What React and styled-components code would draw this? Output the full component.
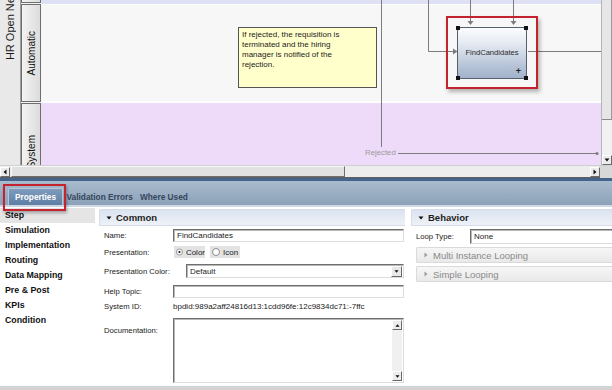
import React from 'react';
import styled, { createGlobalStyle, css } from 'styled-components';

const Global = createGlobalStyle`
  html, body { margin: 0; padding: 0; background: #fff; overflow: hidden; }
  body { font-family: "Liberation Sans", Arial, sans-serif; }
  * { box-sizing: border-box; }
`;

const Page = styled.div`
  width: 612px;
  height: 390px;
  display: flex;
  flex-direction: column;
  overflow: hidden;
  background: #fff;
`;

/* ---------- diagram canvas ---------- */
const Canvas = styled.section`
  flex: none;
  height: 178px;
  display: flex;
  flex-direction: column;
`;

const DiagramRow = styled.div`
  height: 165px;
  display: flex;
  overflow: hidden;
`;

const PoolLabel = styled.div`
  flex: none;
  width: 21px;
  height: 165px;
  background: #e9e9e9;
  border-right: 1px solid #a0a0a0;
  display: flex;
  flex-direction: column;
  justify-content: flex-end;
  align-items: center;
  padding-bottom: 105px;
  overflow: hidden;
`;

const PoolText = styled.span`
  writing-mode: vertical-rl;
  transform: rotate(180deg);
  font-size: 11px;
  color: #1a1a1a;
  white-space: nowrap;
`;

const LaneHeads = styled.div`
  flex: none;
  width: 20px;
  display: flex;
  flex-direction: column;
  gap: 1px;
  background: #f4f4f4;
`;

const LaneHead = styled.div`
  flex: none;
  height: ${p => p.$h}px;
  border: 1px solid #6e6e6e;
  border-top-width: ${p => (p.$open ? 0 : 1)}px;
  background: linear-gradient(90deg, #f3f3f3, #dcdcdc);
  display: flex;
  align-items: center;
  justify-content: center;
  overflow: hidden;
`;

const LaneTitle = styled.span`
  writing-mode: vertical-rl;
  transform: rotate(180deg);
  font-size: 10px;
  color: #111;
  white-space: nowrap;
`;

const Lanes = styled.div`
  flex: 1;
  position: relative;
  display: flex;
  flex-direction: column;
  overflow: hidden;
`;

const Lane = styled.div`
  flex: none;
  height: ${p => p.$h}px;
  background: ${p => p.$bg};
  border-bottom: ${p => p.$sep || 0}px solid #fdfdfd;
`;

const Connectors = styled.svg`
  position: absolute;
  left: 0;
  top: 0;
  pointer-events: none;
`;

const RejectedLabel = styled.span`
  position: absolute;
  left: 324px;
  top: 148px;
  font-size: 7.8px;
  color: #9a9a9a;
  background: #eedbf9;
  padding-right: 1px;
`;

const Note = styled.div`
  position: absolute;
  left: 197px;
  top: 27px;
  width: 139px;
  height: 61px;
  background: #ffffcc;
  border: 1px solid #555;
  padding: 2px 28px 2px 3px;
  font-size: 8px;
  line-height: 10px;
  color: #1c1c1c;
`;

const Selection = styled.div`
  position: absolute;
  left: 405px;
  top: 16px;
  width: 92px;
  height: 73px;
  border: 2px solid #c3232e;
  box-shadow: 2px 3px 4px rgba(0, 0, 0, 0.28);
  display: flex;
  align-items: center;
  justify-content: center;
`;

const Task = styled.div`
  position: relative;
  width: 70px;
  height: 52px;
  border: 1px solid #55606e;
  border-radius: 4px;
  background: linear-gradient(#fbfcfe 0%, #e6ebf3 30%, #b7c4d8 75%, #a2b2ca 100%);
  display: flex;
  align-items: center;
  justify-content: center;
  font-size: 7.6px;
  color: #2a2a2a;
`;

const Plus = styled.span`
  position: absolute;
  right: 5px;
  bottom: 2px;
  font-size: 9px;
  font-weight: bold;
  color: #222;
`;

const Handle = styled.span`
  position: absolute;
  width: 4px;
  height: 4px;
  background: #111;
  ${p => (p.$top ? 'top: -2px;' : 'bottom: -2px;')}
  ${p => (p.$left ? 'left: -2px;' : 'right: -2px;')}
`;

const VScroll = styled.div`
  flex: none;
  width: 11px;
  display: flex;
  flex-direction: column;
  background: #f1f1f1;
  border-left: 1px solid #b5b5b5;
`;

const VThumb = styled.div`
  height: 120px;
  background: #e6e6e6;
  border-bottom: 1px solid #8a8a8a;
  border-right: 1px solid #9a9a9a;
`;

const VTrack = styled.div`
  flex: 1;
`;

const ScrollBtn = styled.div`
  flex: none;
  width: 10px;
  height: 10px;
  background: #ececec;
  border: 1px solid;
  border-color: #fff #6a6a6a #6a6a6a #fff;
  display: flex;
  align-items: center;
  justify-content: center;
`;

const HScroll = styled.div`
  height: 13px;
  display: flex;
  align-items: center;
  background: #ededed;
  border-top: 1px solid #d0d0d0;
  border-bottom: 1px solid #5e5e5e;
`;

const HThumb = styled.div`
  width: 334px;
  height: 11px;
  margin-left: 1px;
  background: #e1e1e1;
  border: 1px solid;
  border-color: #f8f8f8 #6e6e6e #6e6e6e #f8f8f8;
`;

const HTrack = styled.div`
  flex: 1;
`;

const Corner = styled.div`
  width: 12px;
  height: 12px;
  background: #d8d8d8;
`;

/* ---------- properties ---------- */
const Props = styled.section`
  flex: 1;
  display: flex;
  flex-direction: column;
  min-height: 0;
`;

const TabBar = styled.div`
  flex: none;
  height: 29px;
  border-top: 3px solid #45648b;
  border-bottom: 2px solid #cdd8e4;
  background: linear-gradient(#a9bbce, #8ca1b8);
  display: flex;
  align-items: flex-end;
  padding-left: 8px;
`;

const Tab = styled.div`
  position: relative;
  height: 17px;
  display: flex;
  align-items: center;
  padding: 0 ${p => (p.$active ? '6px' : '3.5px')};
  font-size: 8.3px;
  font-weight: bold;
  white-space: nowrap;
  color: ${p => (p.$active ? '#fff' : '#34465c')};
  ${p =>
    p.$active &&
    css`
      background: linear-gradient(#7f9cbd, #5e7ea4);
      border: 1px solid #b8c7d8;
      border-bottom: none;
      border-radius: 2px 2px 0 0;
    `}
  ${p =>
    p.$marked &&
    css`
      &::after {
        content: '';
        position: absolute;
        left: -6px;
        top: -5px;
        right: -4px;
        bottom: -6px;
        border: 2px solid #c3232e;
        box-shadow: 1px 2px 3px rgba(0, 0, 0, 0.3);
      }
    `}
`;

const Body = styled.div`
  flex: 1;
  display: flex;
  min-height: 0;
`;

const Nav = styled.nav`
  flex: none;
  width: 96px;
  padding-top: 1px;
  display: flex;
  flex-direction: column;
`;

const NavItem = styled.div`
  height: 15px;
  width: 95px;
  line-height: 15px;
  padding-left: 5px;
  font-size: 8.8px;
  font-weight: bold;
  color: #111;
  background: ${p => (p.$active ? '#e5e5e5' : 'transparent')};
`;

const Panel = styled.div`
  flex: ${p => (p.$w ? 'none' : '1')};
  width: ${p => (p.$w ? `${p.$w}px` : 'auto')};
  margin-left: ${p => p.$ml}px;
  margin-top: 2px;
  display: flex;
  flex-direction: column;
  overflow: hidden;
`;

const SectionHead = styled.div`
  flex: none;
  height: 17px;
  display: flex;
  align-items: center;
  gap: 4px;
  padding-left: 6px;
  background: linear-gradient(#dbe3f0, #eef2f8);
  border: 1px solid #d6dde8;
  border-right: none;
  border-radius: 2px 0 0 0;
  font-size: 9.5px;
  font-weight: bold;
  color: #1e1e1e;
`;

const Fields = styled.div`
  display: flex;
  flex-direction: column;
  padding-left: 5px;
  padding-top: 3px;
`;

const FieldRow = styled.div`
  display: flex;
  align-items: ${p => (p.$top ? 'flex-start' : 'center')};
  height: ${p => p.$h}px;
  margin-top: ${p => p.$mt || 0}px;
`;

const Label = styled.span`
  flex: none;
  width: ${p => p.$w || 69}px;
  font-size: 7.7px;
  color: #222;
  padding-top: ${p => p.$pt || 0}px;
`;

const Inset = styled.div`
  flex: none;
  width: ${p => p.$w}px;
  height: ${p => p.$h}px;
  margin-left: ${p => p.$ml || 0}px;
  background: #fff;
  border: 1px solid;
  border-color: #6f6f6f #dcdcdc #dcdcdc #6f6f6f;
  box-shadow: inset 1px 1px 0 #b8b8b8;
  display: flex;
  align-items: center;
  padding-left: 3px;
  font-size: 8px;
  color: #222;
  overflow: hidden;
`;

const InsetText = styled.span`
  flex: 1;
  white-space: nowrap;
`;

const DropBtn = styled.div`
  flex: none;
  width: 11px;
  height: 11px;
  margin-right: 1px;
  background: #e8e8e8;
  border: 1px solid;
  border-color: #fff #6a6a6a #6a6a6a #fff;
  display: flex;
  align-items: center;
  justify-content: center;
`;

const Radios = styled.div`
  display: flex;
  gap: 5px;
  margin-left: 1px;
`;

const RadioOpt = styled.label`
  height: 12px;
  width: ${p => p.$w}px;
  display: flex;
  align-items: center;
  gap: 3px;
  padding-left: 2px;
  background: #e3e3e3;
  font-size: 8px;
  color: #222;
`;

const Value = styled.span`
  font-size: 8px;
  color: #222;
  white-space: nowrap;
`;

const AreaBox = styled.div`
  flex: none;
  width: 231px;
  height: 65px;
  background: #fff;
  border: 1px solid;
  border-color: #6f6f6f #dcdcdc #dcdcdc #6f6f6f;
  box-shadow: inset 1px 1px 0 #b8b8b8;
  display: flex;
  justify-content: flex-end;
  padding: 1px;
`;

const AreaScroll = styled.div`
  width: 10px;
  background: #f0f0f0;
  display: flex;
  flex-direction: column;
  justify-content: space-between;
`;

const SubHead = styled.div`
  height: 16px;
  margin-left: 5px;
  margin-top: 3px;
  display: flex;
  align-items: center;
  gap: 4px;
  padding-left: 6px;
  background: linear-gradient(#f6f6f6, #e9e9e9);
  border: 1px solid #dadada;
  border-right: none;
  border-radius: 2px 0 0 2px;
  font-size: 9.5px;
  color: #8a8a8a;
  white-space: nowrap;
`;

const BottomStrip = styled.div`
  flex: none;
  height: 4px;
  background: #d3d3d3;
`;

const Tri = ({ dir = 'down', color = '#111', size = 6 }) => {
  const d = {
    down: 'M0.5 1.5 L5.5 1.5 L3 4.5 Z',
    up: 'M0.5 4.5 L5.5 4.5 L3 1.5 Z',
    right: 'M1.5 0.5 L4.5 3 L1.5 5.5 Z',
    left: 'M4.5 0.5 L1.5 3 L4.5 5.5 Z',
  }[dir];
  return (
    <svg width={size} height={size} viewBox="0 0 6 6">
      <path d={d} fill={color} />
    </svg>
  );
};

const Radio = ({ checked }) => (
  <svg width="8" height="8" viewBox="0 0 8 8">
    <circle cx="4" cy="4" r="3.5" fill="#fff" stroke="#8a8a8a" strokeWidth="1" />
    {checked && <circle cx="4" cy="4" r="1.3" fill="#111" />}
  </svg>
);

const navItems = ['Step', 'Simulation', 'Implementation', 'Routing', 'Data Mapping', 'Pre & Post', 'KPIs', 'Condition'];

export default function App() {
  return (
    <>
      <Global />
      <Page>
        <Canvas>
          <DiagramRow>
            <PoolLabel>
              <PoolText>HR Open New Position</PoolText>
            </PoolLabel>
            <LaneHeads>
              <LaneHead $h={3} $open />
              <LaneHead $h={98}>
                <LaneTitle>Automatic</LaneTitle>
              </LaneHead>
              <LaneHead $h={98}>
                <LaneTitle>System</LaneTitle>
              </LaneHead>
            </LaneHeads>
            <Lanes>
              <Lane $h={5} $bg="#dde1f3" $sep={1} />
              <Lane $h={98} $bg="#f7f7f8" $sep={2} />
              <Lane $h={98} $bg="#eedbf9" />
              <Connectors width="560" height="165" viewBox="0 0 560 165">
                <g stroke="#7c7c7c" strokeWidth="1" fill="none">
                  <path d="M340.5 0 V147" />
                  <path d="M357 153.5 H556" />
                  <path d="M387.5 0 V51.5 H413" />
                  <path d="M429.5 0 V22" />
                  <path d="M472.5 0 V22" />
                  <path d="M487 51.5 H560" />
                </g>
                <g fill="#7c7c7c">
                  <path d="M412 48.5 L416.5 51.5 L412 54.5 Z" />
                  <path d="M426.5 21 L432.5 21 L429.5 25 Z" />
                  <path d="M469.5 21 L475.5 21 L472.5 25 Z" />
                  <circle cx="556" cy="153.5" r="1.5" />
                </g>
              </Connectors>
              <RejectedLabel>Rejected</RejectedLabel>
              <Note>
                If rejected, the requisition is terminated and the hiring manager is notified of the rejection.
              </Note>
              <Selection>
                <Task>
                  FindCandidates
                  <Plus>+</Plus>
                  <Handle $top $left />
                  <Handle $top />
                  <Handle $left />
                  <Handle />
                </Task>
              </Selection>
            </Lanes>
            <VScroll>
              <VThumb />
              <VTrack />
              <ScrollBtn>
                <Tri dir="down" />
              </ScrollBtn>
            </VScroll>
          </DiagramRow>
          <HScroll>
            <ScrollBtn>
              <Tri dir="left" />
            </ScrollBtn>
            <HThumb />
            <HTrack />
            <ScrollBtn>
              <Tri dir="right" />
            </ScrollBtn>
            <Corner />
          </HScroll>
        </Canvas>

        <Props>
          <TabBar>
            <Tab $active $marked>Properties</Tab>
            <Tab>Validation Errors</Tab>
            <Tab>Where Used</Tab>
          </TabBar>
          <Body>
            <Nav>
              {navItems.map((n, i) => (
                <NavItem key={n} $active={i === 0}>
                  {n}
                </NavItem>
              ))}
            </Nav>

            <Panel $w={306} $ml={3}>
              <SectionHead>
                <Tri dir="down" />
                Common
              </SectionHead>
              <Fields>
                <FieldRow $h={13}>
                  <Label>Name:</Label>
                  <Inset $w={231} $h={13}>
                    <InsetText>FindCandidates</InsetText>
                  </Inset>
                </FieldRow>
                <FieldRow $h={12} $mt={4}>
                  <Label>Presentation:</Label>
                  <Radios>
                    <RadioOpt $w={31}>
                      <Radio checked />
                      Color
                    </RadioOpt>
                    <RadioOpt $w={30}>
                      <Radio />
                      Icon
                    </RadioOpt>
                  </Radios>
                </FieldRow>
                <FieldRow $h={14} $mt={6}>
                  <Label>Presentation Color:</Label>
                  <Inset $w={218} $h={14} $ml={13}>
                    <InsetText>Default</InsetText>
                    <DropBtn>
                      <Tri dir="down" size={5} />
                    </DropBtn>
                  </Inset>
                </FieldRow>
                <FieldRow $h={13} $mt={7}>
                  <Label>Help Topic:</Label>
                  <Inset $w={231} $h={13} />
                </FieldRow>
                <FieldRow $h={12} $mt={2}>
                  <Label>System ID:</Label>
                  <Value>bpdid:989a2aff24816d13:1cdd96fe:12c9834dc71:-7ffc</Value>
                </FieldRow>
                <FieldRow $h={65} $mt={6} $top>
                  <Label $pt={8}>Documentation:</Label>
                  <AreaBox>
                    <AreaScroll>
                      <ScrollBtn>
                        <Tri dir="up" size={5} />
                      </ScrollBtn>
                      <ScrollBtn>
                        <Tri dir="down" size={5} />
                      </ScrollBtn>
                    </AreaScroll>
                  </AreaBox>
                </FieldRow>
              </Fields>
            </Panel>

            <Panel $ml={6}>
              <SectionHead>
                <Tri dir="down" />
                Behavior
              </SectionHead>
              <Fields>
                <FieldRow $h={15}>
                  <Label $w={54}>Loop Type:</Label>
                  <Inset $w={150} $h={15}>
                    <InsetText>None</InsetText>
                  </Inset>
                </FieldRow>
              </Fields>
              <SubHead>
                <Tri dir="right" color="#9a9a9a" />
                Multi Instance Looping
              </SubHead>
              <SubHead>
                <Tri dir="right" color="#9a9a9a" />
                Simple Looping
              </SubHead>
            </Panel>
          </Body>
          <BottomStrip />
        </Props>
      </Page>
    </>
  );
}
